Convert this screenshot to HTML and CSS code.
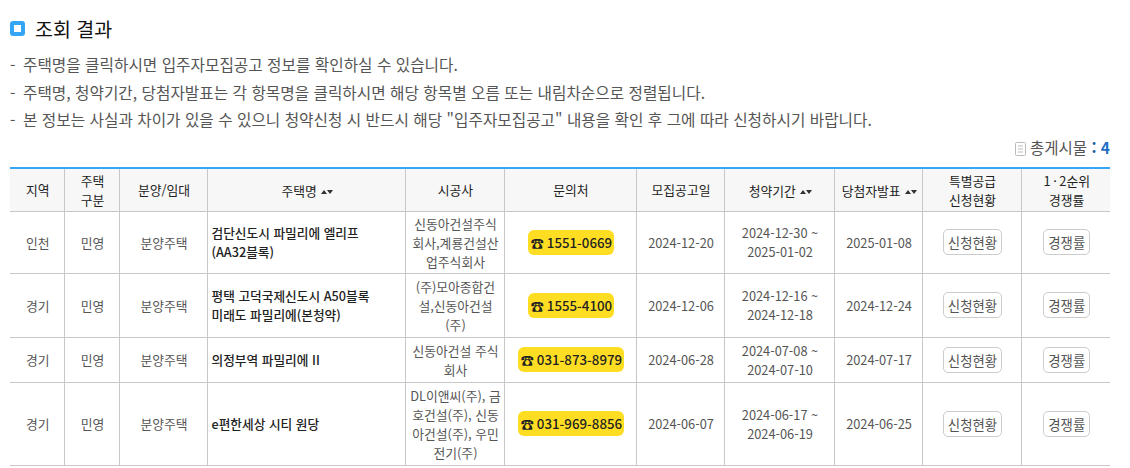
FILE: index.html
```html
<!DOCTYPE html>
<html lang="ko">
<head>
  <meta charset="UTF-8">
  <title>조회 결과</title>
  <link rel="stylesheet" href="styles.css">
</head>
<body>
  <h2 class="title"><span class="title-icon"></span>조회 결과</h2>
  <ul class="notes">
    <li>주택명을 클릭하시면 입주자모집공고 정보를 확인하실 수 있습니다.</li>
    <li>주택명, 청약기간, 당첨자발표는 각 항목명을 클릭하시면 해당 항목별 오름 또는 내림차순으로 정렬됩니다.</li>
    <li>본 정보는 사실과 차이가 있을 수 있으니 청약신청 시 반드시 해당 "입주자모집공고" 내용을 확인 후 그에 따라 신청하시기 바랍니다.</li>
  </ul>
  <div class="total">
    <svg class="doc-icon" width="11" height="14" viewBox="0 0 11 14"><rect x="0.5" y="0.5" width="10" height="13" rx="1" fill="#fff" stroke="#bbb"/><path d="M3 4h5M3 7h5M3 10h5" stroke="#bbb" fill="none"/></svg>
    총게시물 <span class="colon">:</span> <b>4</b>
  </div>
  <table class="list">
    <colgroup>
      <col style="width:54px"><col style="width:55px"><col style="width:88px"><col style="width:198px"><col style="width:99px"><col style="width:132px"><col style="width:88px"><col style="width:110px"><col style="width:88px"><col style="width:99px"><col style="width:89px">
    </colgroup>
    <thead>
      <tr>
        <th>지역</th>
        <th>주택<br>구분</th>
        <th>분양/임대</th>
        <th>주택명 <span class="sort"><i class="up"></i><i class="down"></i></span></th>
        <th>시공사</th>
        <th>문의처</th>
        <th>모집공고일</th>
        <th>청약기간 <span class="sort"><i class="up"></i><i class="down"></i></span></th>
        <th>당첨자발표 <span class="sort"><i class="up"></i><i class="down"></i></span></th>
        <th>특별공급<br>신청현황</th>
        <th>1&thinsp;·&thinsp;2순위<br>경쟁률</th>
      </tr>
    </thead>
    <tbody>
      <tr class="r1">
        <td>인천</td><td>민영</td><td>분양주택</td>
        <td class="name">검단신도시 파밀리에 엘리프<br>(AA32블록)</td>
        <td>신동아건설주식회사,계룡건설산업주식회사</td>
        <td><span class="tel"><span class="tel-icon">☎</span> 1551-0669</span></td>
        <td>2024-12-20</td>
        <td>2024-12-30 ~<br>2025-01-02</td>
        <td>2025-01-08</td>
        <td><span class="btn">신청현황</span></td>
        <td><span class="btn">경쟁률</span></td>
      </tr>
      <tr class="r2">
        <td>경기</td><td>민영</td><td>분양주택</td>
        <td class="name">평택 고덕국제신도시 A50블록<br>미래도 파밀리에(본청약)</td>
        <td>(주)모아종합건설,신동아건설(주)</td>
        <td><span class="tel"><span class="tel-icon">☎</span> 1555-4100</span></td>
        <td>2024-12-06</td>
        <td>2024-12-16 ~<br>2024-12-18</td>
        <td>2024-12-24</td>
        <td><span class="btn">신청현황</span></td>
        <td><span class="btn">경쟁률</span></td>
      </tr>
      <tr class="r3">
        <td>경기</td><td>민영</td><td>분양주택</td>
        <td class="name">의정부역 파밀리에 II</td>
        <td>신동아건설 주식회사</td>
        <td><span class="tel"><span class="tel-icon">☎</span> 031-873-8979</span></td>
        <td>2024-06-28</td>
        <td>2024-07-08 ~<br>2024-07-10</td>
        <td>2024-07-17</td>
        <td><span class="btn">신청현황</span></td>
        <td><span class="btn">경쟁률</span></td>
      </tr>
      <tr class="r4">
        <td>경기</td><td>민영</td><td>분양주택</td>
        <td class="name">e편한세상 시티 원당</td>
        <td>DL이앤씨(주), 금호건설(주), 신동아건설(주), 우민전기(주)</td>
        <td><span class="tel"><span class="tel-icon">☎</span> 031-969-8856</span></td>
        <td>2024-06-07</td>
        <td>2024-06-17 ~<br>2024-06-19</td>
        <td>2024-06-25</td>
        <td><span class="btn">신청현황</span></td>
        <td><span class="btn">경쟁률</span></td>
      </tr>
    </tbody>
  </table>
</body>
</html>
```

FILE: styles.css
```css
* {
    box-sizing: border-box;
}
body {
    margin: 0;
    padding: 0 20px 0 10px;
    background: #fff;
    color: #555;
    font-family: "Noto Sans CJK KR", "Noto Sans", sans-serif;
    font-size: 13px;
}
.title {
    display: flex;
    align-items: center;
    margin: 0;
    padding-top: 14px;
    height: 43px;
    font-size: 19.5px;
    font-weight: 400;
    color: #111;
}
.title-icon {
    width: 15px;
    height: 15px;
    margin-right: 10px;
    border: 4px solid #35a6f5;
    border-radius: 3px;
    background: #fff;
}
.notes {
    margin: 8px 0 0;
    padding: 0;
    list-style: none;
    font-size: 15.7px;
    color: #555;
}
.notes li {
    position: relative;
    height: 27.7px;
    line-height: 27.7px;
    padding-left: 13px;
}
.notes li::before {
    content: "-";
    position: absolute;
    left: 0;
}
.total {
    height: 33px;
    line-height: 26px;
    text-align: right;
    font-size: 15.5px;
    color: #555;
}
.total .doc-icon {
    vertical-align: -2px;
}
.total .colon {
    color: #1f5fa8;
    font-weight: 700;
}
.total b {
    color: #1f6fc4;
}
.list {
    width: 1100px;
    table-layout: fixed;
    border-collapse: collapse;
    border-top: 2px solid #35a6f5;
}
.list th, .list td {
    border: 1px solid #c8c8c8;
    padding: 0 1px 0 3px;
    text-align: center;
    line-height: 19px;
    font-size: 12.8px;
}
.list th:first-child, .list td:first-child {
    border-left: 0;
}
.list th:last-child, .list td:last-child {
    border-right: 0;
}
.list th {
    height: 43px;
    background: #f7f7f7;
    font-weight: 400;
    color: #222;
    border-top: 0;
}
.r1 td { height: 62px; }
.r2 td { height: 64px; }
.r3 td { height: 45px; }
.r4 td { height: 83px; }
.list td.name {
    padding-left: 4px;
    text-align: left;
    font-weight: 500;
    font-size: 12.7px;
    color: #222;
}
.sort {
    display: inline-block;
    margin-left: 1px;
    margin-right: -1px;
    vertical-align: 2px;
}
.sort i {
    display: inline-block;
    width: 0;
    height: 0;
    border-left: 3px solid transparent;
    border-right: 3px solid transparent;
}
.sort .up {
    border-bottom: 4px solid #333;
}
.sort .down {
    border-top: 4px solid #333;
}
.tel {
    display: inline-block;
    padding: 0 2px 0 3px;
    height: 25px;
    line-height: 25px;
    border-radius: 6px;
    background: #ffdd22;
    color: #222;
    font-size: 13.3px;
    font-weight: 500;
    white-space: nowrap;
}
.tel-icon {
    font-size: 13px;
}
.btn {
    display: inline-block;
    height: 26px;
    line-height: 24px;
    padding: 0 4px;
    border: 1px solid #ccc;
    border-radius: 5px;
    background: #fff;
    color: #555;
    font-size: 13.4px;
}
```
